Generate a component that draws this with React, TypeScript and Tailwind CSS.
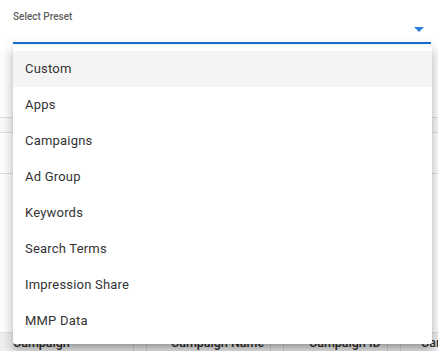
import React from 'react';

const presets = ['Custom', 'Apps', 'Campaigns', 'Ad Group', 'Keywords', 'Search Terms', 'Impression Share', 'MMP Data'];

const columns = [
  { label: 'Campaign', width: 'w-[147px]', pad: 'pl-[13px]' },
  { label: 'Campaign Name', width: 'w-[137px]', pad: 'pl-[24px]' },
  { label: 'Campaign ID', width: 'w-[117px]', pad: 'pl-[25px]' },
  { label: 'Campaign Status', width: 'w-[120px]', pad: 'pl-[20px]' }
];

export default function App() {
  return <div className="relative w-[438px] h-[351px] overflow-hidden bg-white font-['Roboto',sans-serif]">
      {/* select field */}
      <div className="pt-[10px] px-[13px]">
        <label className="block text-[10px] leading-[13px] font-medium text-[#5f5f5f]">
          Select Preset
        </label>
        <div className="relative h-[21px] border-b-2 border-[#1672d6] mr-[-6px]">
          <svg className="absolute right-[7px] top-[4px]" width="10" height="5" viewBox="0 0 10 5">
            <path d="M0 0h10L5 5z" fill="#2a7fde" />
          </svg>
        </div>
      </div>

      {/* content beneath the menu */}
      <div className="mt-[73px] border-t border-[#e0e0e0] h-[15px] bg-[#fafafa]" />
      <div className="border-t border-[#e0e0e0] h-[41px]" />
      <div className="border-t border-[#e0e0e0] h-[159px]" />
      <div className="flex h-[30px] bg-[#f0f0f0] border-t border-[#e0e0e0]">
        {columns.map(c => <div key={c.label} className={`${c.width} ${c.pad} shrink-0 relative pt-[1px] text-[12.5px] font-medium text-[#333] whitespace-nowrap overflow-hidden`}>
            {c.label}
            <span className="absolute right-0 top-0 h-full border-r border-[#d6d6d6]" />
            <span className="absolute right-[13px] top-0 h-full border-r border-[#d6d6d6]" />
          </div>)}
      </div>

      {/* open menu */}
      <ul className="absolute left-[13px] top-[45px] w-[419px] pt-[6px] pb-[5px] bg-white rounded-[2px] shadow-[0_5px_5px_-3px_rgba(0,0,0,0.2),0_8px_10px_1px_rgba(0,0,0,0.14),0_3px_14px_2px_rgba(0,0,0,0.12)]">
        {presets.map((p, i) => <li key={p} className={`h-[36px] flex items-center pl-[12px] text-[13px] text-[#333] tracking-[0.2px] ${i === 0 ? 'bg-[#f4f4f4]' : ''}`}>
            {p}
          </li>)}
      </ul>
    </div>;
}
